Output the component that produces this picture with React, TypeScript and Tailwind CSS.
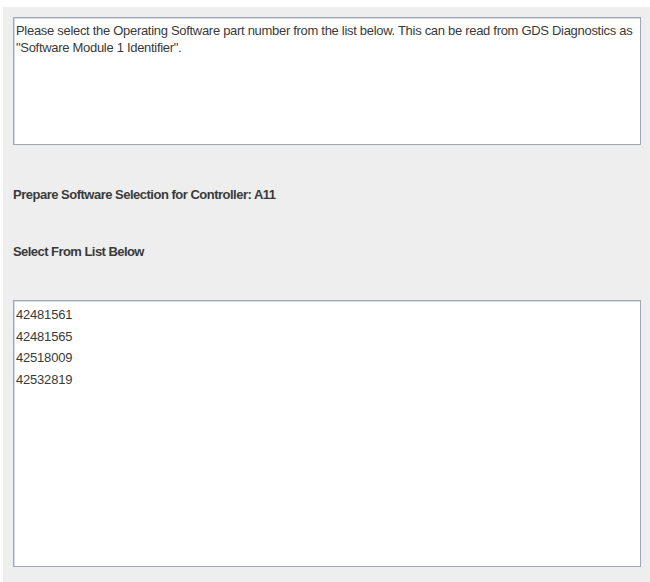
import React from "react"

const partNumbers = ["42481561", "42481565", "42518009", "42532819"]

export default function App() {
  return (
    <div className="h-[582px] w-[650px] bg-white pl-[3px] pt-[7px] font-['Liberation_Sans',Arial,sans-serif] text-[#3a3a3a]">
      <div className="flex h-full flex-col bg-[#eeeeee] pl-[10px] pr-[9px] pt-[10px]">
        {/* Instructions */}
        <div className="h-[128px] border border-[#9ea8b6] bg-white px-[2px] pt-[4px] text-[13px] leading-[17px] tracking-[-0.3px] shadow-[inset_1px_1px_0_#d5dae2]">
          Please select the Operating Software part number from the list below. This can be read from GDS Diagnostics as
          "Software Module 1 Identifier".
        </div>

        <div className="mt-[42px] text-[13px] font-bold leading-[16px] tracking-[-0.5px]">
          Prepare Software Selection for Controller: A11
        </div>
        <div className="mt-[41px] text-[13px] font-bold leading-[16px] tracking-[-0.55px]">
          Select From List Below
        </div>

        {/* Part number list */}
        <div className="mt-[40px] h-[267px] border border-[#9ea8b6] bg-white pt-[3px] pl-[2px] text-[13px] leading-[21.5px] tracking-[-0.2px] shadow-[inset_1px_1px_0_#d5dae2]">
          {partNumbers.map((n) => (
            <div key={n}>{n}</div>
          ))}
        </div>
      </div>
    </div>
  )
}
